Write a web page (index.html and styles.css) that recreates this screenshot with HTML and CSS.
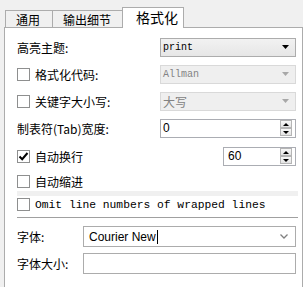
FILE: index.html
```html
<!DOCTYPE html>
<html lang="zh-CN">
<head>
  <meta charset="utf-8">
  <title>格式化</title>
  <link rel="stylesheet" href="styles.css">
</head>
<body>
  <!-- Tab strip -->
  <div class="tabs">
    <div class="tab tab-general">通用</div>
    <div class="tab tab-output">输出细节</div>
    <div class="tab tab-format active">格式化</div>
  </div>

  <div class="panel">
    <div class="row row-1">
      <span class="label">高亮主题:</span>
      <div class="combo">
        <span class="combo-text mono">print</span>
        <svg class="combo-arrow" width="7" height="4" viewBox="0 0 7 4"><polygon points="0,0 7,0 3.5,4" fill="#000"/></svg>
      </div>
    </div>

    <div class="row row-2">
      <label class="check"><span class="box"></span><span>格式化代码:</span></label>
      <div class="combo disabled">
        <span class="combo-text mono">Allman</span>
        <svg class="combo-arrow" width="7" height="4" viewBox="0 0 7 4"><polygon points="0,0 7,0 3.5,4" fill="#a8a8a8"/></svg>
      </div>
    </div>

    <div class="row row-3">
      <label class="check"><span class="box"></span><span>关键字大小写:</span></label>
      <div class="combo disabled">
        <span class="combo-text">大写</span>
        <svg class="combo-arrow" width="7" height="4" viewBox="0 0 7 4"><polygon points="0,0 7,0 3.5,4" fill="#a8a8a8"/></svg>
      </div>
    </div>

    <div class="row row-4">
      <span class="label">制表符(Tab)宽度:</span>
      <div class="spin">
        <span class="spin-text">0</span>
        <div class="spin-btns">
          <span class="spin-btn"><span class="tri-up"></span></span>
          <span class="spin-btn"><span class="tri-down"></span></span>
        </div>
      </div>
    </div>

    <div class="row row-5">
      <label class="check">
        <span class="box">
          <svg width="11" height="11" viewBox="0 0 11 11"><path d="M1.5 5.5 L4.2 8.2 L9.5 2" fill="none" stroke="#000" stroke-width="2"/></svg>
        </span>
        <span>自动换行</span>
      </label>
      <div class="spin spin-small">
        <span class="spin-text">60</span>
        <div class="spin-btns">
          <span class="spin-btn"><span class="tri-up"></span></span>
          <span class="spin-btn"><span class="tri-down"></span></span>
        </div>
      </div>
    </div>

    <div class="row row-6">
      <label class="check"><span class="box"></span><span>自动缩进</span></label>
    </div>

    <div class="omit">
      <label class="check"><span class="box"></span><span class="mono omit-text">Omit line numbers of wrapped lines</span></label>
    </div>

    <div class="separator"></div>

    <div class="font-row">
      <span class="font-label">字体:</span>
      <div class="field">
        <span class="field-text">Courier New</span><span class="caret"></span>
        <svg class="chevron" width="8" height="5" viewBox="0 0 8 5"><path d="M0.5 0.5 L4 4 L7.5 0.5" fill="none" stroke="#808080" stroke-width="1.3"/></svg>
      </div>
    </div>

    <div class="font-row font-row-2">
      <span class="font-label">字体大小:</span>
      <div class="field"></div>
    </div>
  </div>
</body>
</html>
```

FILE: styles.css
```css
* {
  margin: 0;
  padding: 0;
  box-sizing: border-box;
}

body {
  width: 303px;
  height: 287px;
  overflow: hidden;
  background: #f0f0f0;
  color: #000;
  font-family: "Noto Sans CJK SC", "Liberation Sans", sans-serif;
  font-size: 12px;
}

.mono {
  font-family: "Liberation Mono", "DejaVu Sans Mono", monospace;
}

/* Tabs */
.tabs {
  display: flex;
  align-items: flex-end;
  height: 27px;
  padding-left: 5px;
}

.tab {
  height: 17px;
  border: 1px solid #acacac;
  border-bottom: none;
  background: #f0f0f0;
  font-size: 12px;
  line-height: 15px;
  padding-top: 1px;
  white-space: nowrap;
}

.tab-general {
  width: 48px;
  padding-left: 10px;
}

.tab-output {
  width: 70px;
  border-left: none;
  padding-left: 10px;
}

.tab.active {
  position: relative;
  z-index: 1;
  width: 62px;
  height: 21px;
  margin-left: -1px;
  margin-bottom: -1px;
  background: #fff;
  font-size: 14px;
  line-height: 17px;
  padding-top: 1px;
  padding-left: 13px;
}

/* Panel */
.panel {
  width: 299px;
  height: 260px;
  margin-left: 4px;
  border: 1px solid #acacac;
  border-bottom: none;
  background: #fff;
  padding: 5px 6px 0 12px;
}

.row {
  display: flex;
  align-items: center;
  justify-content: space-between;
}

.row-1 { height: 28px; }
.row-2 { height: 26px; }
.row-3 { height: 28px; }
.row-4 { height: 26px; }
.row-5 { height: 30px; }

.row-6 {
  height: 20px;
  align-items: flex-end;
  padding-bottom: 1px;
}

.check {
  display: flex;
  align-items: center;
  gap: 5px;
  white-space: nowrap;
}

.box {
  width: 13px;
  height: 13px;
  border: 1px solid #8e8f8f;
  background: #fff;
  display: flex;
  align-items: center;
  justify-content: center;
  flex-shrink: 0;
}

/* Combo boxes */
.combo {
  width: 136px;
  height: 19px;
  border: 1px solid #acacac;
  background: linear-gradient(#f2f2f2, #e6e6e6);
  display: flex;
  align-items: center;
  justify-content: space-between;
  padding: 0 6px 0 2px;
}

.combo-text {
  font-size: 10px;
}

.combo.disabled {
  border-color: #d9d9d9;
  background: #efefef;
  color: #838383;
}

.combo.disabled .combo-text:not(.mono) {
  font-size: 12px;
}

/* Spin boxes */
.spin {
  width: 136px;
  height: 19px;
  border: 1px solid #abadb3;
  background: #fff;
  display: flex;
  align-items: center;
  justify-content: space-between;
  padding: 0 3px 0 2px;
  font-family: "Liberation Sans", sans-serif;
}

.spin-small {
  width: 73px;
  padding-left: 4px;
}

.spin-text {
  font-size: 12px;
}

.spin-btns {
  display: flex;
  flex-direction: column;
}

.spin-btn {
  width: 12px;
  height: 8px;
  border: 1px solid #b5b5b5;
  background: linear-gradient(#f8f8f8, #e4e4e4);
  display: flex;
  align-items: center;
  justify-content: center;
}

.spin-btn + .spin-btn {
  margin-top: 0;
}

.tri-up {
  width: 0;
  height: 0;
  border-left: 3px solid transparent;
  border-right: 3px solid transparent;
  border-bottom: 3px solid #000;
}

.tri-down {
  width: 0;
  height: 0;
  border-left: 3px solid transparent;
  border-right: 3px solid transparent;
  border-top: 3px solid #000;
}

/* Omit row */
.omit {
  height: 22px;
  margin-right: -2px;
  border-top: 5px solid #f0f0f0;
  display: flex;
  align-items: center;
}

.omit-text {
  font-size: 11.3px;
}

.separator {
  height: 1px;
  margin: 4px -2px 0 0;
  background: #a0a0a0;
}

/* Font rows */
.font-row {
  display: flex;
  align-items: center;
  margin-top: 8px;
}

.font-row-2 {
  margin-top: 6px;
}

.font-label {
  width: 66px;
}

.field {
  width: 213px;
  height: 21px;
  border: 1px solid #acacac;
  background: #fff;
  display: flex;
  align-items: center;
  padding: 0 7px 0 5px;
  font-family: "Liberation Sans", sans-serif;
  font-size: 12px;
}

.caret {
  width: 1px;
  height: 14px;
  margin-left: 1px;
  background: #000;
}

.chevron {
  margin-left: auto;
}
```
